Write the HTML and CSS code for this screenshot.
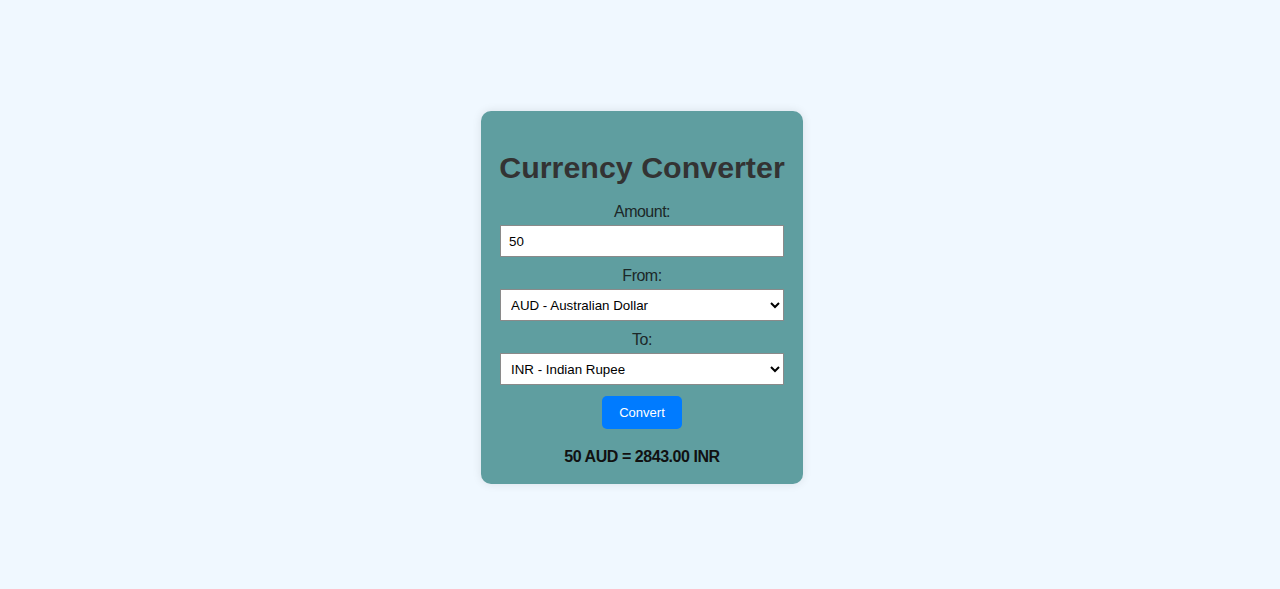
FILE: index.html
```html
<!DOCTYPE html>
<html lang="en">
<head>
<meta charset="UTF-8">
<title>Currency Converter</title>
<link rel="stylesheet" href="styles.css">
</head>
<body>
  <div class="card">
    <h1 class="title">Currency Converter</h1>
    <label class="label" for="amount">Amount:</label>
    <input class="field" id="amount" type="number" value="50">
    <label class="label" for="from">From:</label>
    <select class="field select" id="from">
      <option>USD - US Dollar</option>
      <option selected>AUD - Australian Dollar</option>
      <option>INR - Indian Rupee</option>
    </select>
    <label class="label" for="to">To:</label>
    <select class="field select" id="to">
      <option>USD - US Dollar</option>
      <option>AUD - Australian Dollar</option>
      <option selected>INR - Indian Rupee</option>
    </select>
    <button class="convert" type="button">Convert</button>
    <p class="result">50 AUD = 2843.00 INR</p>
  </div>
</body>
</html>
```

FILE: styles.css
```css
html, body {
  margin: 0;
}

body {
  background: #f0f8ff;
  font-family: "Liberation Sans", Arial, sans-serif;
  min-height: 100vh;
  box-sizing: border-box;
  padding: 6px 0 0 4px;
  display: flex;
  justify-content: center;
  align-items: center;
}

.card {
  width: 284px;
  padding: 20px 19px 18px;
  background: #5f9ea0;
  border-radius: 10px;
  box-shadow: 0 0 10px rgba(0, 0, 0, 0.1);
  display: flex;
  flex-direction: column;
  align-items: center;
}

.title {
  margin: 19px -10px 18px;
  font-size: 30.4px;
  line-height: 34.5px;
  font-weight: bold;
  color: #333;
  white-space: nowrap;
  text-align: center;
}

.label {
  display: block;
  font-size: 16px;
  letter-spacing: -0.5px;
  line-height: 18px;
  color: #1c2828;
  padding-top: 1px;
  margin-bottom: 4px;
}

.field {
  box-sizing: border-box;
  width: 100%;
  height: 32px;
  margin: 0 0 9px;
  padding: 0 8px;
  border: 1px solid #8a8a8a;
  background: #fff;
  font-family: "Liberation Sans", Arial, sans-serif;
  font-size: 13.33px;
  color: #000;
  border-radius: 0;
  outline: none;
}

.field::-webkit-outer-spin-button,
.field::-webkit-inner-spin-button {
  -webkit-appearance: none;
  margin: 0;
}

.select {
  padding: 0 6px;
}

.convert {
  margin-top: 2px;
  height: 33px;
  padding: 0 17px;
  border: none;
  border-radius: 5px;
  background: #007bff;
  color: #fff;
  font-family: "Liberation Sans", Arial, sans-serif;
  font-size: 13px;
  cursor: pointer;
}

.result {
  margin: 19px 0 0;
  font-size: 16px;
  letter-spacing: -0.45px;
  line-height: 18.4px;
  font-weight: bold;
  color: #111;
}
```
